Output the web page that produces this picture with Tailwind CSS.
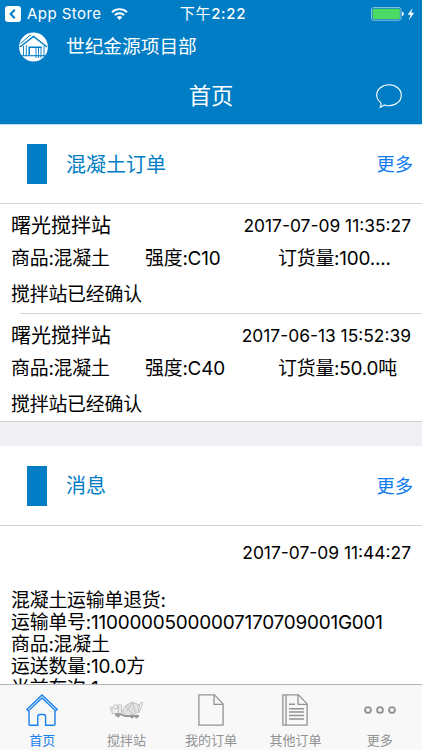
<!DOCTYPE html>
<html lang="zh-CN">
  <head>
    <meta charset="UTF-8">
    <meta name="viewport" content="width=device-width, initial-scale=1.0">
    <title>首页</title>
    <script src="https://cdn.jsdelivr.net/npm/@tailwindcss/browser@4"></script>
  </head>
  <body class="bg-white font-['Inter','Noto_Sans_CJK_SC',sans-serif] font-[395] text-black">
    <div class="w-[422px] h-[750px] flex flex-col overflow-hidden">

      <header class="h-[124px] shrink-0 bg-[#007dc5] text-white">
        <!-- status bar -->
        <div class="h-[27px] grid grid-cols-3 items-center pl-[5px] pr-[6px]">
          <div class="flex items-center">
            <svg class="w-4 h-4" viewBox="0 0 16 16">
              <rect width="16" height="16" rx="3" fill="#fff"/>
              <path d="M9.8 3.8 5.6 8l4.2 4.2" fill="none" stroke="#007dc5" stroke-width="2"/>
            </svg>
            <span class="ml-[6px] text-[15px] leading-5 tracking-[0.45px] whitespace-nowrap">App Store</span>
            <svg class="ml-[9px] w-[17px] h-3" viewBox="0 0 17 12">
              <g fill="none" stroke="#fff" stroke-width="1.9">
                <path d="M1 4.2a10.8 10.8 0 0 1 15 0"/>
                <path d="M3.8 7.1a6.8 6.8 0 0 1 9.4 0"/>
              </g>
              <path d="M8.5 12 5.8 9.2a3.9 3.9 0 0 1 5.4 0z" fill="#fff"/>
            </svg>
          </div>
          <div class="pl-[5px] text-center text-[15px] leading-5 tracking-[0.7px]"><span class="font-normal">下午</span><span class="font-medium">2:22</span></div>
          <div class="flex items-center justify-end">
            <svg class="w-[46px] h-[14px]" viewBox="0 0 46 14">
              <rect x="1.5" y=".6" width="29.5" height="12.6" rx="2" fill="none" stroke="#8fc4df"/>
              <rect x="2.6" y="1.7" width="27.3" height="10.4" rx="1" fill="#4cd964"/>
              <path d="M32 4.8c2.4.4 2.4 3.8 0 4.2z" fill="#fff"/>
              <path d="M42.6 1 37.6 7.8h2.9l-1.6 5.4 5.2-7.4h-3z" fill="#fff"/>
            </svg>
          </div>
        </div>
        <!-- project -->
        <div class="h-10 flex items-center pl-[19px]">
          <svg class="w-[29px] h-[30px]" viewBox="0 0 29 30">
            <circle cx="14.5" cy="15" r="14.4" fill="#fff"/>
            <g fill="none" stroke="#007dc5">
              <path d="M1 15 14.500 4.500 28 15" stroke-width="1.500"/>
              <path d="M1.500 11.500 12 2.500" stroke-width="1"/>
              <path d="M4.500 14v9.500M7.300 13v10.500" stroke-width=".9"/>
              <path d="M10.200 23V15.200h12.600" stroke-width="1.500"/>
              <path d="M3 23.700h23" stroke-width="1.100"/>
              <path d="M17 16v10M19.500 16v10M22 16v10M25 14v11" stroke-width=".9"/>
            </g>
          </svg>
          <span class="ml-[18px] text-[18.7px] leading-7">世纪金源项目部</span>
        </div>
        <!-- title -->
        <div class="h-[57px] grid grid-cols-[1fr_auto_1fr] items-center">
          <span></span>
          <h1 class="text-[22.3px] leading-8">首页</h1>
          <svg class="justify-self-end mr-5 w-[26px] h-6" viewBox="0 0 26 24">
            <path d="M4.8 18.6C2.2 16.6.7 14 .7 11.200 .7 5.400 6.200.7 13 .7s12.300 4.700 12.300 10.500S19.800 21.700 13 21.700c-1.700 0-3.200-.3-4.700-.8-1.200 1.100-2.600 1.900-4 2.200 .8-1.400 1-2.900.5-4.500z" fill="none" stroke="#fff" stroke-width="1.100"/>
          </svg>
        </div>
      </header>

      <main class="flex-1 min-h-0 overflow-hidden border-t border-[#b9dcef]">
        <section>
          <div class="h-[79px] flex items-center pl-[27px] pr-[9px] border-b border-[#d4d4d6] text-[#007dc5]">
            <span class="w-5 h-10 bg-[#007dc5]"></span>
            <h2 class="ml-[19px] pt-px text-[20px] leading-7">混凝土订单</h2>
            <a class="ml-auto text-[18.3px] leading-7 text-[#0f7bee]">更多</a>
          </div>
          <article class="h-[109px] pl-[11px] pr-[11px] pt-2">
            <div class="h-7 flex items-center justify-between">
              <h3 class="text-[20px] leading-7">曙光搅拌站</h3>
              <time class="text-[17.4px] leading-7">2017-07-09 11:35:27</time>
            </div>
            <div class="mt-[5px] h-7 grid grid-cols-[134px_133px_1fr] text-[18.9px] leading-7 tracking-[-0.2px]">
              <span>商品:混凝土</span>
              <span>强度:C10</span>
              <span>订货量:100....</span>
            </div>
            <p class="mt-2 text-[18.9px] leading-7 tracking-[-0.2px]">搅拌站已经确认</p>
          </article>
          <article class="h-[109px] pl-[11px] pr-[11px] border-b border-[#d0d0d3]">
            <div class="ml-[9px] -mr-[11px] h-px bg-[#d4d4d6]"></div>
            <div class="mt-2 h-7 flex items-center justify-between">
              <h3 class="text-[20px] leading-7">曙光搅拌站</h3>
              <time class="text-[17.4px] leading-7">2017-06-13 15:52:39</time>
            </div>
            <div class="mt-[5px] h-7 grid grid-cols-[134px_133px_1fr] text-[18.9px] leading-7 tracking-[-0.2px]">
              <span>商品:混凝土</span>
              <span>强度:C40</span>
              <span>订货量:50.0吨</span>
            </div>
            <p class="mt-2 text-[18.9px] leading-7 tracking-[-0.2px]">搅拌站已经确认</p>
          </article>
        </section>

        <div class="h-6 bg-[#efeff4]"></div>

        <section>
          <div class="h-20 flex items-center pl-[27px] pr-[9px] border-b border-[#d4d4d6] text-[#007dc5]">
            <span class="w-5 h-10 bg-[#007dc5]"></span>
            <h2 class="ml-[19px] text-[20px] leading-7">消息</h2>
            <a class="ml-auto text-[18.3px] leading-7 text-[#0f7bee]">更多</a>
          </div>
          <article class="px-[11px] pt-[13px]">
            <time class="block text-right text-[17.4px] leading-7">2017-07-09 11:44:27</time>
            <div class="mt-[23px] text-[18.9px] leading-[22px] tracking-[-0.2px] whitespace-nowrap">
              <p>混凝土运输单退货:</p>
              <p>运输单号:11000005000007170709001G001</p>
              <p>商品:混凝土</p>
              <p>运送数量:10.0方</p>
              <p>当前车次:1</p>
            </div>
          </article>
        </section>
      </main>

      <nav class="h-[66px] shrink-0 grid grid-cols-5 border-t border-[#b5b5b7] bg-[#f8f8f8] text-[#929292] text-[13px] leading-5">
        <a class="flex flex-col items-center text-[#1a80ec]">
          <svg class="mt-[9px] w-8 h-8" viewBox="0 0 32 32" fill="none" stroke="currentColor" stroke-width="1.4">
            <path d="M.8 15.400 16 1l15.200 14.400-1.600 1.500L16 4 2.400 16.900z"/>
            <path d="M3 17v13.200c0 .7.400 1.100 1.100 1.100h7.700v-8.500c0-1.500.8-2.300 2.200-2.300h3.400c1.400 0 2.200.8 2.200 2.300v8.500h8.300c.7 0 1.100-.4 1.100-1.100V17"/>
          </svg>
          <span class="mt-1">首页</span>
        </a>
        <a class="flex flex-col items-center">
          <!-- mixer truck -->
          <svg class="mt-[9px] w-[34px] h-8" viewBox="0 0 34 32" fill="none" stroke="#b4b4b4" stroke-width=".8">
            <path d="M2 19.500V14l2.500-3h7v8.500z" fill="#eee"/>
            <path d="M3.500 14.500h4V12M8.500 12v7M.8 12v5" />
            <path d="m12.500 17 3-5.500 7-3.400 7 3-1 6.500-7 3.900h-7z" fill="#e2e2e2"/>
            <path d="m15.500 12 7 8M22.500 8.500 25 18M17 17l5-8M29 11l3-3.200M32.800 8l-1.500 5-2.500 6" />
            <path d="M5 20.500h6l4 1.500h14" stroke="#999" stroke-width="1.800"/>
            <g fill="#999" stroke="#999">
              <circle cx="8" cy="21.500" r="1.500"/>
              <circle cx="22" cy="22.500" r="1.500"/>
              <circle cx="26.500" cy="22.500" r="1.500"/>
            </g>
          </svg>
          <span class="mt-1">搅拌站</span>
        </a>
        <a class="flex flex-col items-center">
          <svg class="mt-[9px] w-[26px] h-8" viewBox="0 0 26 32" fill="none" stroke="currentColor" stroke-width="1.300">
            <path d="M.9.900h15.600l8.600 9v21.200H.9z"/>
            <path d="M16 1v9.300h9"/>
          </svg>
          <span class="mt-1">我的订单</span>
        </a>
        <a class="flex flex-col items-center">
          <svg class="mt-[9px] w-[26px] h-8" viewBox="0 0 26 32" fill="none" stroke="currentColor" stroke-width="1.300">
            <path d="M.9.900h15.600l8.600 9v21.200H.9zM4 1v30"/>
            <path d="M16 1v9.300h9"/>
            <path d="M7 10.200h6M7 14.700h15M7 18h15M7 21.400h15M7 25h15" stroke-width="1.500"/>
          </svg>
          <span class="mt-1">其他订单</span>
        </a>
        <a class="flex flex-col items-center">
          <svg class="mt-[9px] w-8 h-8" viewBox="0 0 32 32" fill="none" stroke="currentColor" stroke-width="1.900">
            <circle cx="4" cy="16" r="2.900"/>
            <circle cx="16" cy="16" r="2.900"/>
            <circle cx="28" cy="16" r="2.900"/>
          </svg>
          <span class="mt-1">更多</span>
        </a>
      </nav>
    </div>
  </body>
</html>
